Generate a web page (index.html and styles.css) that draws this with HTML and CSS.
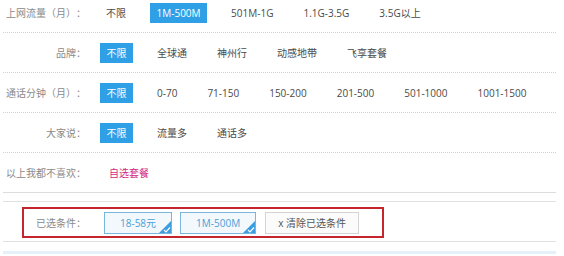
FILE: index.html
```html
<!DOCTYPE html>
<html lang="zh-CN">
<head>
<meta charset="utf-8">
<title>套餐筛选</title>
<link rel="stylesheet" href="styles.css">
</head>
<body>
<div class="page">
  <div class="filters">
    <div class="row">
      <div class="label">上网流量（月）：</div>
      <ul class="opts">
        <li>不限</li>
        <li class="on">1M-500M</li>
        <li>501M-1G</li>
        <li>1.1G-3.5G</li>
        <li>3.5G以上</li>
      </ul>
    </div>
    <div class="row">
      <div class="label">品牌：</div>
      <ul class="opts">
        <li class="on">不限</li>
        <li>全球通</li>
        <li>神州行</li>
        <li>动感地带</li>
        <li>飞享套餐</li>
      </ul>
    </div>
    <div class="row">
      <div class="label">通话分钟（月）：</div>
      <ul class="opts">
        <li class="on">不限</li>
        <li>0-70</li>
        <li>71-150</li>
        <li>150-200</li>
        <li>201-500</li>
        <li>501-1000</li>
        <li>1001-1500</li>
      </ul>
    </div>
    <div class="row">
      <div class="label">大家说：</div>
      <ul class="opts">
        <li class="on">不限</li>
        <li>流量多</li>
        <li>通话多</li>
      </ul>
    </div>
    <div class="row last">
      <div class="label">以上我都不喜欢：</div>
      <ul class="opts">
        <li class="custom">自选套餐</li>
      </ul>
    </div>
  </div>

  <div class="selected">
    <div class="sel-box">
      <span class="sel-label">已选条件：</span>
      <span class="tag">18-58元<svg class="corner" viewBox="0 0 12 12" width="12" height="12"><path d="M12 0 L12 12 L0 12 Z" fill="#3a9ee0"/><path d="M5 9 L7 11 L11 6.5" fill="none" stroke="#fff" stroke-width="1.2"/></svg></span>
      <span class="tag">1M-500M<svg class="corner" viewBox="0 0 12 12" width="12" height="12"><path d="M12 0 L12 12 L0 12 Z" fill="#3a9ee0"/><path d="M5 9 L7 11 L11 6.5" fill="none" stroke="#fff" stroke-width="1.2"/></svg></span>
      <span class="clear">x 清除已选条件</span>
    </div>
  </div>
  <div class="next"></div>
</div>
</body>
</html>
```

FILE: styles.css
```css
html, body {
  margin: 0;
  padding: 0;
  background: #fff;
}
body {
  font-family: "Open Sans", "Noto Sans CJK SC", sans-serif;
  font-size: 10px;
  color: #555;
  text-spacing-trim: space-all;
}
.page {
  width: 553px;
  margin: -7px 0 0 3px;
}
.row {
  display: flex;
  align-items: center;
  height: 39px;
  border-bottom: 1px dotted #d2d2d2;
}
.row.last {
  border-bottom: 1px solid #dcdcdc;
}
.label {
  width: 83px;
  text-align: right;
  color: #8a8a8a;
  white-space: nowrap;
  font-family: "Noto Sans CJK SC", sans-serif;
  text-spacing-trim: space-all;
  font-feature-settings: "fwid" 1;
}
.opts {
  display: flex;
  gap: 18px;
  list-style: none;
  margin: 0 0 0 14px;
  padding: 0;
}
.opts li {
  height: 20px;
  line-height: 20px;
  padding: 0 6px;
  white-space: nowrap;
  color: #4a4a4a;
}
.opts li.on {
  background: #2f9fe6;
  color: #fff;
  padding: 0 6.5px;
}
.opts li.custom {
  color: #d42a82;
  padding-left: 9px;
}
.selected {
  margin-top: 8px;
  border-top: 1px solid #e2e2e2;
  border-bottom: 1px solid #e2e2e2;
  padding: 5px 0 3px 19px;
}
.sel-box {
  display: flex;
  align-items: center;
  gap: 8px;
  width: 346px;
  height: 27px;
  border: 2px solid #c3262c;
  padding-left: 12px;
}
.sel-label {
  color: #8a8a8a;
  width: 60px;
}
.tag {
  position: relative;
  height: 20px;
  line-height: 20px;
  padding: 0 15px;
  border: 1px solid #79b6dc;
  background: #f2f8fc;
  color: #4a9fd8;
}
.corner {
  position: absolute;
  right: 0;
  bottom: 0;
  display: block;
}
.clear {
  margin-left: 1px;
  height: 20px;
  line-height: 20px;
  padding: 0 12px;
  border: 1px solid #d4d4d4;
  background: #fbfbfb;
  color: #555;
}
.next {
  margin-top: 9px;
  border-top: 3px solid #e6f0f8;
}
```
